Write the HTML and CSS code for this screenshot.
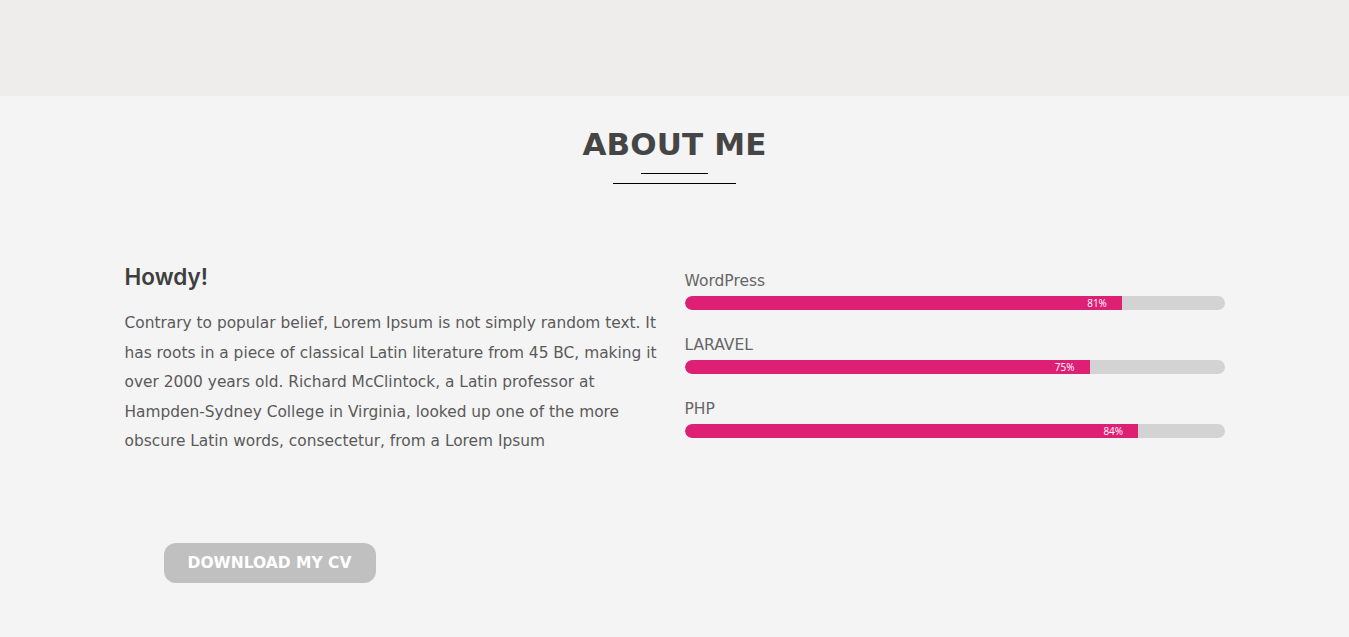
FILE: index.html
```html
<!DOCTYPE html>
<html lang="en">
<head>
<meta charset="utf-8">
<title>About Me</title>
<link rel="stylesheet" href="styles.css">
</head>
<body>
<header class="top-band"></header>
<section class="about">
  <div class="title-wrap">
    <h2 class="title">ABOUT ME</h2>
    <span class="rule rule-short"></span>
    <span class="rule rule-long"></span>
  </div>
  <div class="content">
    <div class="intro">
      <h3 class="howdy">Howdy!</h3>
      <p class="text">Contrary to popular belief, Lorem Ipsum is not simply random text. It has roots in a piece of classical Latin literature from 45 BC, making it over 2000 years old. Richard McClintock, a Latin professor at Hampden-Sydney College in Virginia, looked up one of the more obscure Latin words, consectetur, from a Lorem Ipsum</p>
    </div>
    <div class="skills">
      <div class="skill">
        <div class="skill-name">WordPress</div>
        <div class="bar"><div class="fill" style="width:81%"><span>81%</span></div></div>
      </div>
      <div class="skill">
        <div class="skill-name">LARAVEL</div>
        <div class="bar"><div class="fill" style="width:75%"><span>75%</span></div></div>
      </div>
      <div class="skill">
        <div class="skill-name">PHP</div>
        <div class="bar"><div class="fill" style="width:84%"><span>84%</span></div></div>
      </div>
    </div>
  </div>
  <div class="cta">
    <a class="btn" href="#">DOWNLOAD MY CV</a>
  </div>
</section>
</body>
</html>
```
FILE: styles.css
```css
* { box-sizing: border-box; }
html, body { margin: 0; padding: 0; }
body {
  background: #f4f4f4;
  font-family: "DejaVu Sans", sans-serif;
  color: #4a4a4a;
}
.top-band {
  height: 96px;
  background: #eeedeb;
}
.about {
  width: 1100px;
  margin: 0 auto;
  padding-top: 28px;
}
.title-wrap {
  display: flex;
  flex-direction: column;
  align-items: center;
}
.title {
  margin: 0;
  font-family: "DejaVu Sans", sans-serif;
  font-weight: bold;
  font-size: 31px;
  line-height: 40px;
  color: #454545;
  letter-spacing: 0.1px;
}
.rule {
  display: block;
  height: 1px;
  background: #000;
}
.rule-short { width: 67px; margin-top: 9px; }
.rule-long { width: 123px; margin-top: 9px; }
.content {
  display: flex;
  gap: 20px;
  margin-top: 78px;
}
.intro { width: 540px; }
.howdy {
  margin: 0;
  font-family: "Inter", "DejaVu Sans", sans-serif;
  font-weight: 600;
  font-size: 22.5px;
  line-height: 30px;
  color: #3e3e3e;
}
.text {
  margin: 17px 0 0;
  font-family: "DejaVu Sans", sans-serif;
  font-size: 15.4px;
  line-height: 29.6px;
  color: #5a5a5a;
}
.skills {
  width: 540px;
  padding-top: 7px;
  display: flex;
  flex-direction: column;
  gap: 23px;
}
.skill-name {
  font-family: "DejaVu Sans", sans-serif;
  font-size: 15.5px;
  line-height: 24px;
  color: #666;
  margin-bottom: 3px;
}
.bar {
  height: 14px;
  border-radius: 7px;
  background: #d3d3d3;
  overflow: hidden;
}
.fill {
  height: 100%;
  background: #de2075;
  border-radius: 7px 0 0 7px;
  display: flex;
  justify-content: flex-end;
  align-items: center;
  padding-right: 15px;
}
.fill span {
  font-family: "Open Sans", sans-serif;
  font-size: 10px;
  line-height: 14px;
  color: #fff;
}
.cta {
  display: flex;
  margin-top: 86px;
  padding-left: 39px;
  padding-bottom: 54px;
}
.btn {
  display: flex;
  align-items: center;
  justify-content: center;
  width: 212px;
  height: 40px;
  border-radius: 12px;
  background: #c0c0c0;
  color: #fff;
  text-decoration: none;
  font-family: "DejaVu Sans", sans-serif;
  font-weight: bold;
  font-size: 15.5px;
}
```
